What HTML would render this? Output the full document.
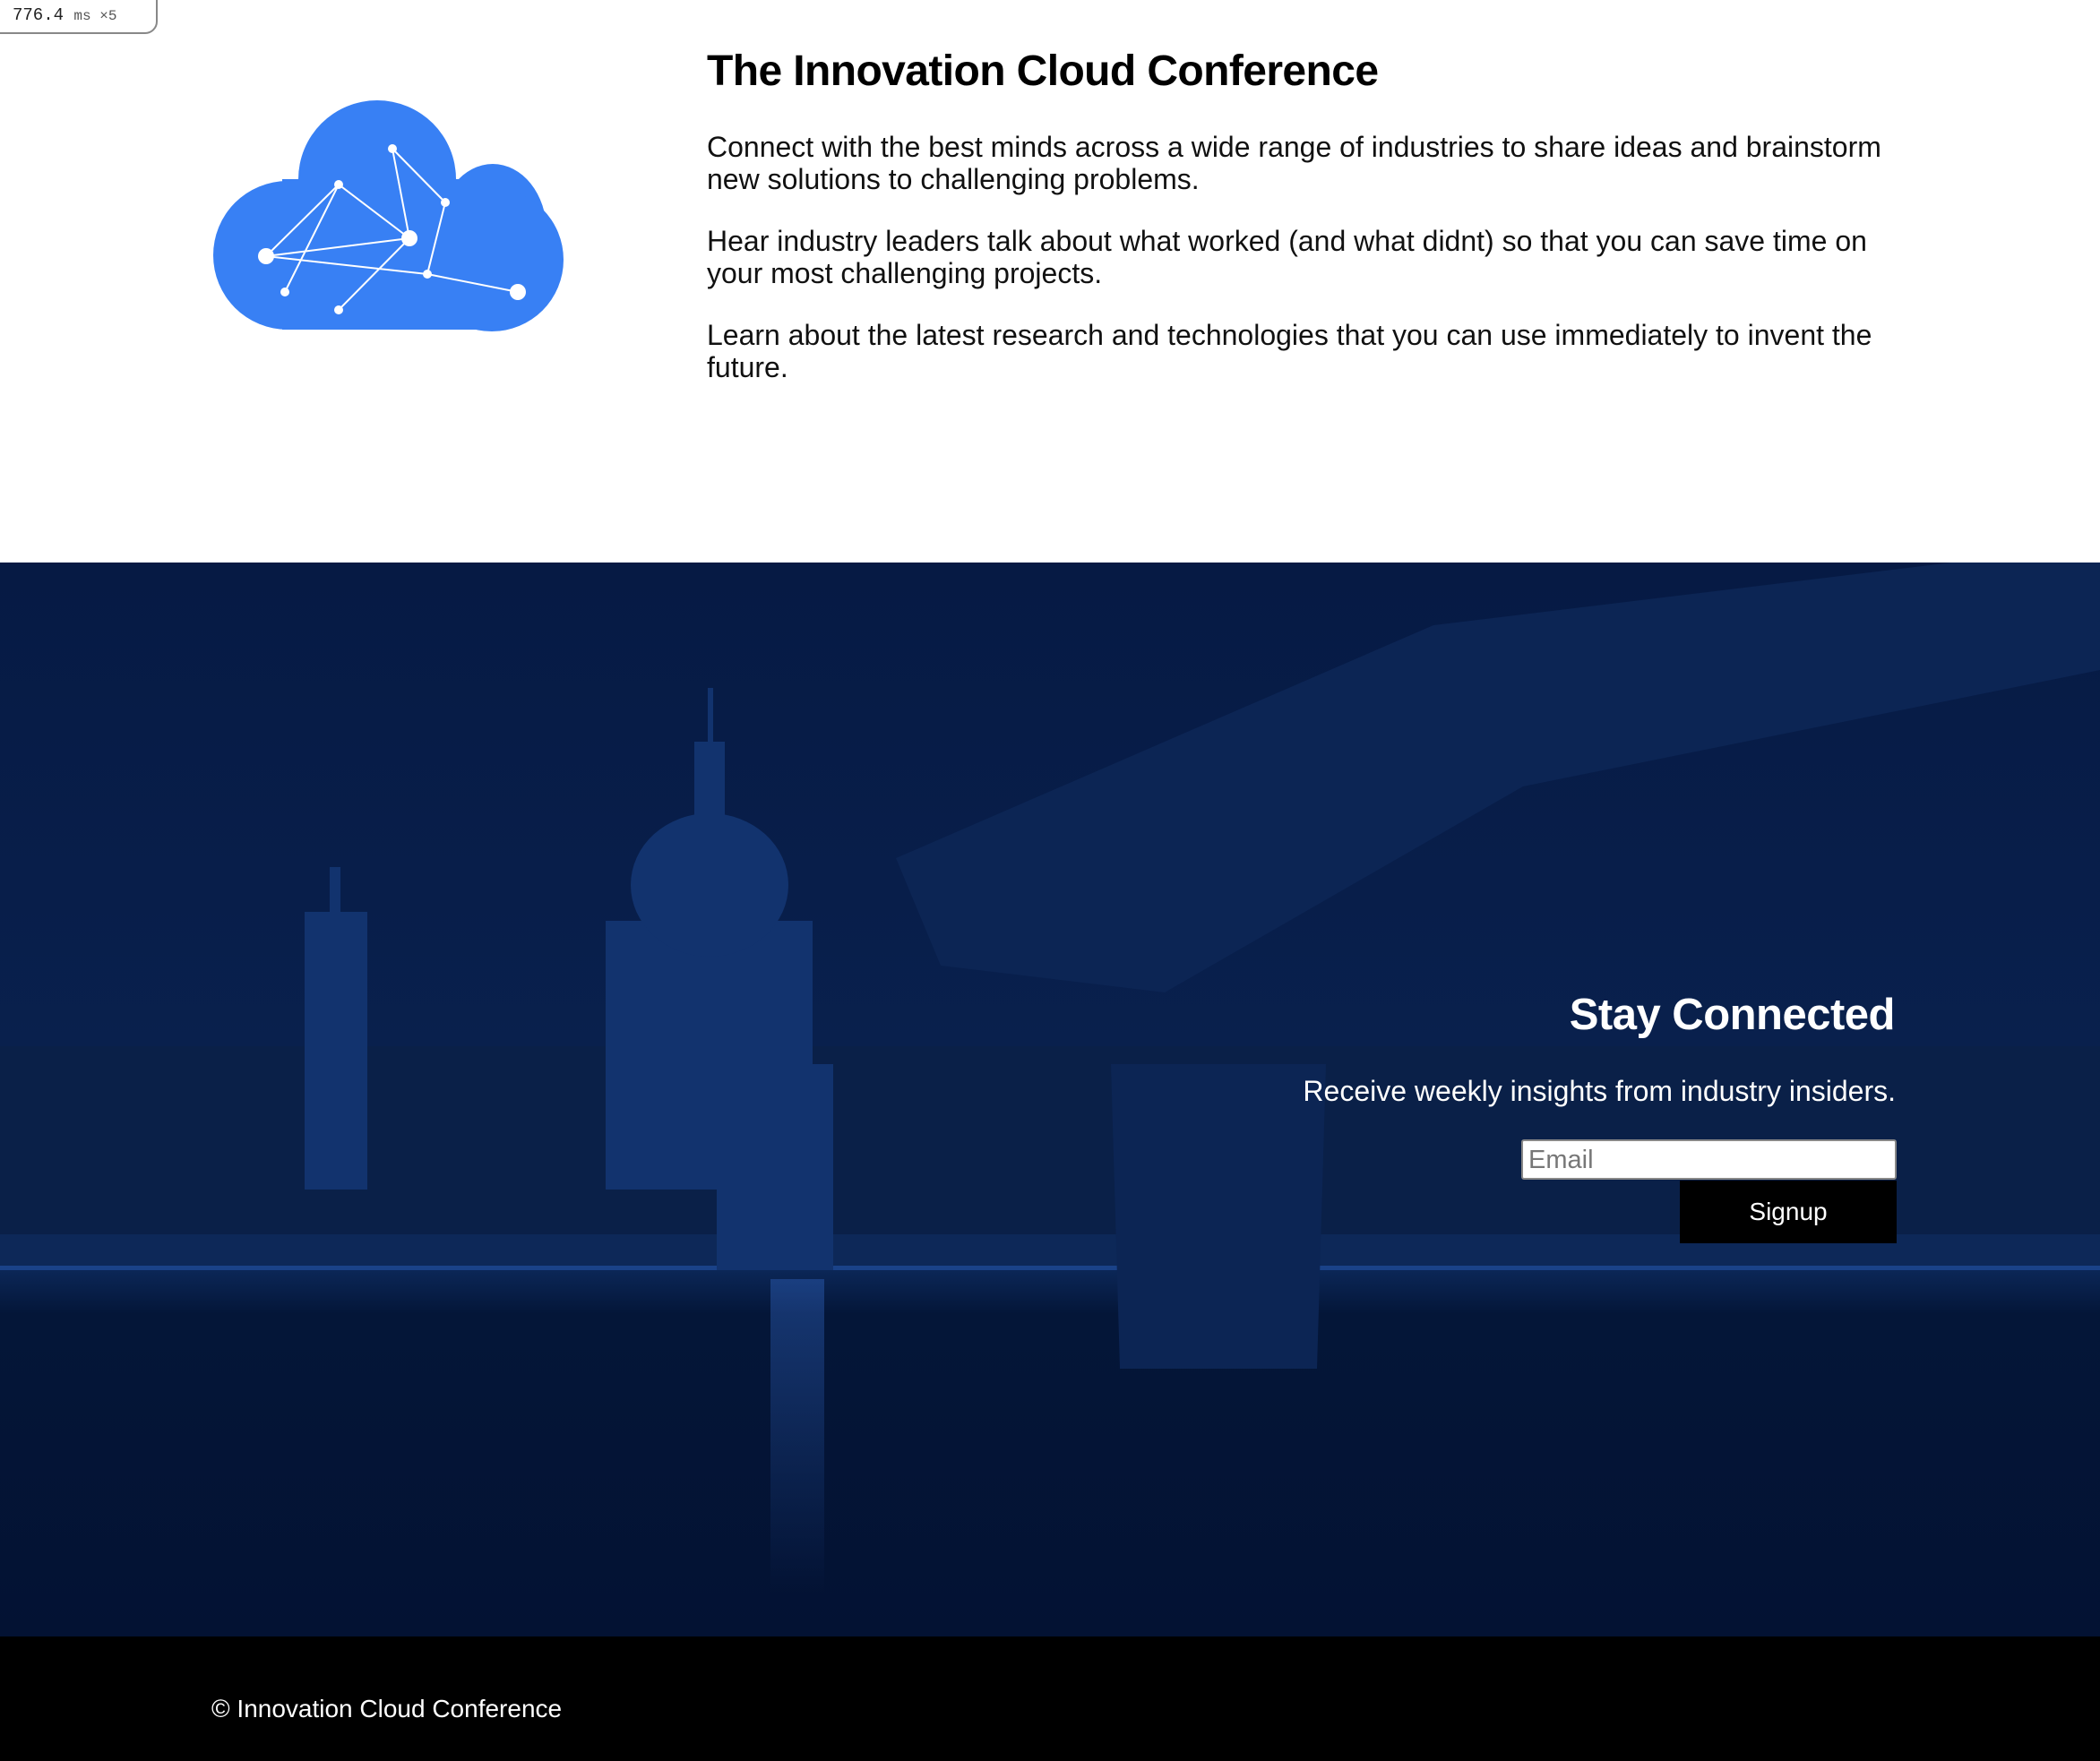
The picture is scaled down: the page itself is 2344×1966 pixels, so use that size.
<!DOCTYPE html>
<html><head><meta charset="utf-8"><style>
*{margin:0;padding:0;box-sizing:border-box}
body{width:2344px;height:1966px;position:relative;background:#fff;font-family:"Liberation Sans",Arial,sans-serif;overflow:hidden}
.badge{position:absolute;left:-2px;top:-2px;width:178px;height:40px;border:2px solid #888;border-radius:0 0 14px 0;font-family:"Liberation Mono",monospace;font-size:19px;color:#222;padding:6px 0 0 14px;background:#fff}
.badge small{font-size:16px;color:#555}
h1{position:absolute;left:789px;top:52px;font-size:48px;font-weight:bold;color:#000;letter-spacing:-0.6px}
.txt{position:absolute;left:789px;top:146px;width:1345px;font-size:32px;line-height:36px;color:#111}
.txt p{margin-bottom:33px}
.hero{position:absolute;left:0;top:628px;width:2344px;height:1199px;overflow:hidden}
.foot{position:absolute;left:0;top:1827px;width:2344px;height:139px;background:#000;color:#fff;font-size:28px;padding:65px 0 0 236px}
.sc{position:absolute;right:229px;top:1105px;color:#fff;font-size:49px;font-weight:bold;text-align:right;letter-spacing:-0.5px}
.rw{position:absolute;right:228px;top:1200px;color:#fff;font-size:32px}
.email{position:absolute;left:1698px;top:1272px;width:419px;height:45px;background:#fff;border:2px solid #888;border-radius:3px;color:#777;font-size:29px;padding:5px 6px}
.btn{position:absolute;left:1875px;top:1318px;width:242px;height:70px;background:#000;color:#fff;font-size:28px;text-align:center;line-height:70px}
</style></head><body>
<div class="badge">776.4 <small>ms ×5</small></div>
<svg style="position:absolute;left:0;top:0" width="700" height="400">
<g fill="#3880f4">
<circle cx="421" cy="200" r="88"/>
<circle cx="321" cy="285" r="83"/>
<ellipse cx="550" cy="258" rx="60" ry="75"/>
<circle cx="549" cy="290" r="80"/>
<rect x="315" y="200" width="240" height="168"/>
</g>
<g stroke="#fff" stroke-width="2" fill="none">
<path d="M438 166L457 266M438 166L497 226M378 206L297 286M378 206L318 326M378 206L457 266M297 286L457 266M297 286L477 306L578 326M497 226L477 306M457 266L378 346"/>
</g>
<g fill="#fff">
<circle cx="438" cy="166" r="5"/><circle cx="378" cy="206" r="5"/><circle cx="497" cy="226" r="5"/><circle cx="457" cy="266" r="9"/><circle cx="297" cy="286" r="9"/><circle cx="477" cy="306" r="5"/><circle cx="318" cy="326" r="5"/><circle cx="578" cy="326" r="9"/><circle cx="378" cy="346" r="5"/>
</g>
</svg>
<h1>The Innovation Cloud Conference</h1>
<div class="txt">
<p>Connect with the best minds across a wide range of industries to share ideas and brainstorm new solutions to challenging problems.</p>
<p>Hear industry leaders talk about what worked (and what didnt) so that you can save time on your most challenging projects.</p>
<p>Learn about the latest research and technologies that you can use immediately to invent the future.</p>
</div>
<div class="hero">
<svg width="2344" height="1199">
<defs>
<linearGradient id="g" x1="0" y1="0" x2="0" y2="1">
<stop offset="0" stop-color="#061a44"/><stop offset="0.6" stop-color="#0a2250"/><stop offset="0.66" stop-color="#0b2656"/><stop offset="0.7" stop-color="#041638"/><stop offset="1" stop-color="#031233"/>
</linearGradient>
<linearGradient id="r" x1="0" y1="0" x2="0" y2="1"><stop offset="0" stop-color="#2a5ab0" stop-opacity=".5"/><stop offset="1" stop-color="#2a5ab0" stop-opacity="0"/></linearGradient>
</defs>
<rect width="2344" height="1199" fill="url(#g)"/>
<rect x="0" y="540" width="2344" height="250" fill="#0a2048"/>
<rect x="0" y="750" width="2344" height="40" fill="#0d2858"/>
<rect x="0" y="785" width="2344" height="5" fill="#1a4288"/>
<g fill="#12336e">
<rect x="676" y="400" width="231" height="300"/>
<ellipse cx="792" cy="360" rx="88" ry="80"/>
<rect x="775" y="200" width="34" height="120"/>
<rect x="790" y="140" width="6" height="70"/>
<rect x="340" y="390" width="70" height="310"/>
<rect x="368" y="340" width="12" height="60"/>
<rect x="800" y="560" width="130" height="230"/>
</g>
<g fill="#0c2554">
<polygon points="1000,330 1600,70 2344,-20 2344,120 1700,250 1300,480 1050,450"/>
<polygon points="1240,560 1480,560 1470,900 1250,900"/>
</g>
<rect x="860" y="800" width="60" height="350" fill="url(#r)"/>
</svg>
</div>
<div class="sc">Stay Connected</div>
<div class="rw">Receive weekly insights from industry insiders.</div>
<div class="email">Email</div>
<div class="btn">Signup</div>
<div class="foot">© Innovation Cloud Conference</div>
</body></html>
